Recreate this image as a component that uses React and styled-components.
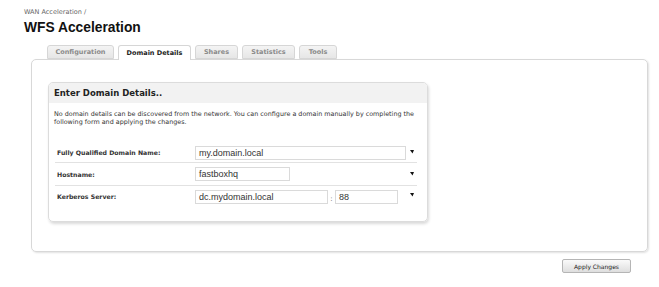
import React from 'react';
import styled, { createGlobalStyle } from 'styled-components';

const GlobalStyle = createGlobalStyle`
  body {
    margin: 0;
    background: #fff;
    font-family: "DejaVu Sans", Verdana, sans-serif;
  }
`;

const Page = styled.div`
  padding: 7px 11px 0 24px;
  width: 659px;
  box-sizing: border-box;
`;

const Breadcrumb = styled.div`
  font-size: 6.5px;
  color: #666;
  height: 10px;
  line-height: 10px;
`;

const Title = styled.h1`
  margin: 2px 0 0;
  font-family: "Liberation Sans", Arial, sans-serif;
  font-size: 13.8px;
  font-weight: bold;
  color: #111;
  line-height: 17px;
  height: 26px;
`;

const TabRow = styled.div`
  display: flex;
  gap: 4px;
  margin-left: 23px;
  height: 14px;
  position: relative;
  z-index: 1;
`;

const Tab = styled.div`
  width: ${p => p.w}px;
  box-sizing: border-box;
  height: ${p => (p.active ? 15 : 14)}px;
  border: 1px solid #d6d6d6;
  border-bottom: ${p => (p.active ? 'none' : '1px solid #d6d6d6')};
  border-radius: 3px 3px 0 0;
  background: ${p => (p.active ? '#fff' : 'linear-gradient(#f4f4f4, #e6e6e6)')};
  font-size: 6.5px;
  font-weight: bold;
  color: ${p => (p.active ? '#222' : '#8a8a8a')};
  display: flex;
  align-items: center;
  justify-content: center;
`;

const Panel = styled.div`
  margin-left: 7px;
  height: 193px;
  box-sizing: border-box;
  border: 1px solid #d8d8d8;
  border-radius: 5px;
  box-shadow: 1px 1px 2px rgba(0, 0, 0, 0.12);
  padding: 22px 0 0 16px;
`;

const Box = styled.div`
  width: 380px;
  height: 140px;
  box-sizing: border-box;
  border: 1px solid #dcdcdc;
  border-radius: 5px;
  box-shadow: 1px 2px 3px rgba(0, 0, 0, 0.15);
  overflow: hidden;
`;

const BoxHeader = styled.div`
  height: 20px;
  background: #f2f2f2;
  padding-left: 5px;
  display: flex;
  align-items: center;
  font-size: 8.5px;
  font-weight: bold;
  color: #222;
`;

const Intro = styled.p`
  margin: 7px 0 0 5px;
  font-size: 6.4px;
  line-height: 8px;
  color: #333;
  width: 368px;
`;

const Form = styled.div`
  margin: 17px 0 0 6px;
  width: 362px;
`;

const Row = styled.div`
  display: flex;
  align-items: center;
  height: ${p => p.h}px;
  border-bottom: ${p => (p.last ? 'none' : '1px solid #e2e2e2')};
  position: relative;
`;

const Label = styled.div`
  width: 138px;
  padding-left: 2px;
  font-size: 6.2px;
  font-weight: bold;
  color: #333;
`;

const Input = styled.div`
  width: ${p => p.w}px;
  height: 14px;
  box-sizing: border-box;
  border: 1px solid #dadada;
  font-family: "Liberation Sans", Arial, sans-serif;
  font-size: 9px;
  color: #333;
  padding-left: 3px;
  display: flex;
  align-items: center;
`;

const Colon = styled.span`
  width: 7px;
  font-size: 7px;
  text-align: center;
  color: #555;
  padding-top: 4px;
`;

const Marker = styled.svg`
  position: absolute;
  right: 3px;
  top: ${p => p.top}px;
`;

const Footer = styled.div`
  display: flex;
  justify-content: flex-end;
  padding: 7px 17px 0 0;
`;

const Button = styled.button`
  width: 69px;
  height: 14px;
  padding: 0;
  border: 1px solid #b5b5b5;
  border-radius: 2px;
  background: linear-gradient(#fafafa, #dedede);
  font-family: "DejaVu Sans", Verdana, sans-serif;
  font-size: 6px;
  color: #222;
`;

const Required = ({ top }) => (
  <Marker width="4" height="4" viewBox="0 0 4 4" top={top}>
    <path d="M0 0 H4 L2.5 3.5 Z" fill="#111" />
  </Marker>
);

const tabs = [
  { name: 'Configuration', w: 67 },
  { name: 'Domain Details', w: 73, active: true },
  { name: 'Shares', w: 43 },
  { name: 'Statistics', w: 53 },
  { name: 'Tools', w: 38 },
];

export default function App() {
  return (
    <Page>
      <GlobalStyle />
      <Breadcrumb>WAN Acceleration /</Breadcrumb>
      <Title>WFS Acceleration</Title>
      <TabRow>
        {tabs.map(t => (
          <Tab key={t.name} w={t.w} active={t.active}>{t.name}</Tab>
        ))}
      </TabRow>
      <Panel>
        <Box>
          <BoxHeader>Enter Domain Details..</BoxHeader>
          <Intro>
            No domain details can be discovered from the network. You can configure a domain manually by completing the
            following form and applying the changes.
          </Intro>
          <Form>
            <Row h={19}>
              <Label>Fully Qualified Domain Name:</Label>
              <Input w={211}>my.domain.local</Input>
              <Required top={7} />
            </Row>
            <Row h={22}>
              <Label>Hostname:</Label>
              <Input w={95}>fastboxhq</Input>
              <Required top={9} />
            </Row>
            <Row h={21} last>
              <Label>Kerberos Server:</Label>
              <Input w={133}>dc.mydomain.local</Input>
              <Colon>:</Colon>
              <Input w={63}>88</Input>
              <Required top={7} />
            </Row>
          </Form>
        </Box>
      </Panel>
      <Footer>
        <Button>Apply Changes</Button>
      </Footer>
    </Page>
  );
}
